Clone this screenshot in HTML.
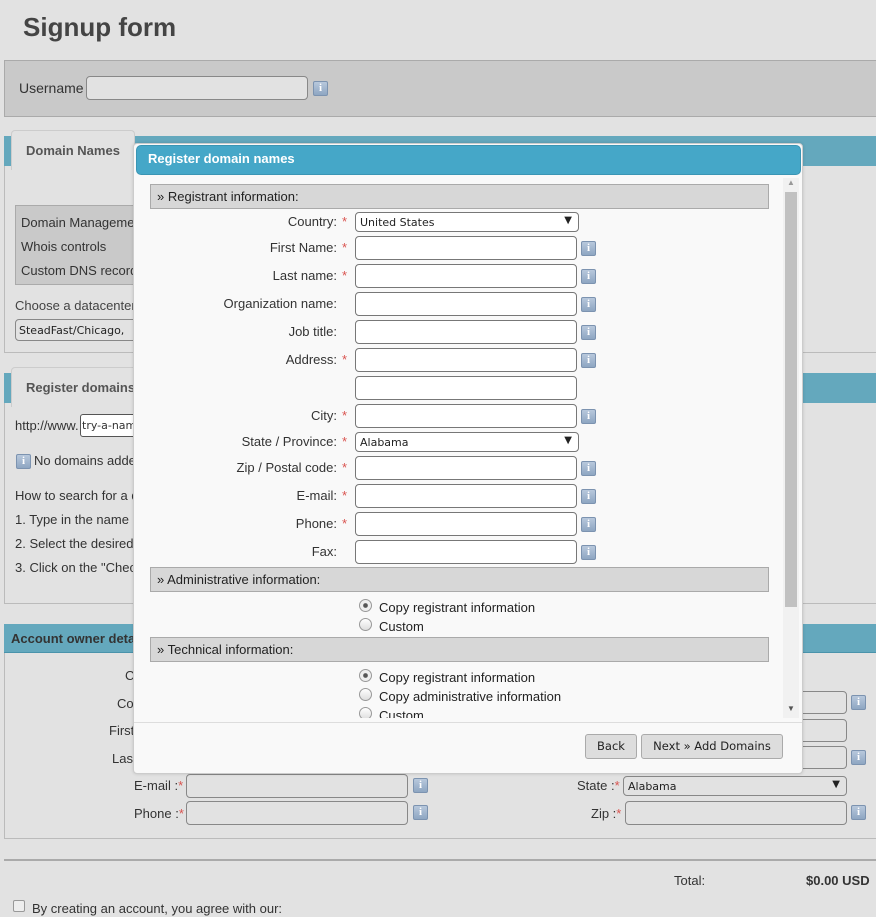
<!DOCTYPE html>
<html><head><meta charset="utf-8"><style>
*{box-sizing:border-box;margin:0;padding:0}
body{width:876px;height:917px;overflow:hidden;background:#e2e2e2;font-family:"Liberation Sans",Arial,sans-serif;font-size:13px;color:#333;position:relative}
.a{position:absolute}
.inp{position:absolute;background:#e2e2e2;border:1px solid #888;border-radius:4px}
.mi{position:absolute;background:#fff;border:1px solid #777;border-radius:4px;height:24px;width:222px;left:355px}
.i{position:absolute;width:15px;height:15px;background:linear-gradient(#b8c8dc,#8ea6c2);border:1px solid #7c93b0;border-radius:2px;color:#fff;font:bold 11px "Liberation Serif",serif;text-align:center;line-height:13px}
.lbl{position:absolute;right:539px;font-size:13px;color:#333;white-space:nowrap}
.st{color:#d9534f;position:absolute;left:100%;margin-left:5px}
.sec{position:absolute;left:150px;width:619px;height:25px;background:#d7d7d7;border:1px solid #aaa;font-size:13px;line-height:23px;padding-left:6px;color:#222}
.rad{position:absolute;left:359px;width:13px;height:13px;border-radius:50%;border:1px solid #999;background:linear-gradient(#fff,#ddd)}
.rl{position:absolute;left:379px;font-size:13px;color:#222}
.t{position:absolute;white-space:nowrap}
.sel{font-family:"DejaVu Sans",sans-serif;font-size:11px}
.btn{font-family:"DejaVu Sans",sans-serif;font-size:11.5px}
</style></head><body>
<div class="t" style="left:23px;top:12px;font-size:26px;font-weight:bold;color:#444">Signup form</div>
<div class="a" style="left:4px;top:60px;width:876px;height:57px;background:#c9c9c9;border:1px solid #aaa"></div>
<div class="t" style="left:19px;top:80px;font-size:14px;color:#333">Username</div>
<div class="inp" style="left:86px;top:76px;width:222px;height:24px"></div>
<div class="i" style="left:313px;top:81px">i</div>

<div class="a" style="left:4px;top:136px;width:876px;height:30px;background:#64a8bd"></div>
<div class="a" style="left:4px;top:166px;width:876px;height:187px;border:1px solid #bbb;border-top:none"></div>
<div class="a" style="left:11px;top:130px;width:124px;height:40px;background:#e2e2e2;border:1px solid #ccc;border-bottom:none;border-radius:4px 4px 0 0"></div>
<div class="t" style="left:26px;top:143px;font-weight:bold;color:#555">Domain Names</div>
<div class="a" style="left:15px;top:205px;width:125px;height:80px;background:#c9c9c9;border:1px solid #aaa"></div>
<div class="t" style="left:21px;top:215px">Domain Management</div>
<div class="t" style="left:21px;top:239px">Whois controls</div>
<div class="t" style="left:21px;top:263px">Custom DNS records</div>
<div class="t" style="left:15px;top:298px;color:#444">Choose a datacenter</div>
<div class="inp sel" style="left:15px;top:319px;width:140px;height:22px;padding:4px 3px;color:#222">SteadFast/Chicago,</div>

<div class="a" style="left:4px;top:373px;width:876px;height:30px;background:#64a8bd"></div>
<div class="a" style="left:4px;top:403px;width:876px;height:201px;border:1px solid #bbb;border-top:none"></div>
<div class="a" style="left:11px;top:367px;width:140px;height:40px;background:#e2e2e2;border:1px solid #ccc;border-bottom:none;border-radius:4px 4px 0 0"></div>
<div class="t" style="left:26px;top:380px;font-weight:bold;color:#555">Register domains</div>
<div class="t" style="left:15px;top:418px">http://www.</div>
<div class="a sel" style="left:80px;top:414px;width:80px;height:23px;background:#fff;border:1px solid #555;border-radius:3px;padding:4px 1px">try-a-name</div>
<div class="i" style="left:16px;top:454px">i</div>
<div class="t" style="left:34px;top:453px">No domains added</div>
<div class="t" style="left:15px;top:488px">How to search for a domain</div>
<div class="t" style="left:15px;top:512px">1. Type in the name of</div>
<div class="t" style="left:15px;top:536px">2. Select the desired</div>
<div class="t" style="left:15px;top:560px">3. Click on the "Check"</div>

<div class="a" style="left:4px;top:624px;width:876px;height:29px;background:#64a8bd;border-bottom:1px solid #4a93ab"></div>
<div class="a" style="left:4px;top:653px;width:876px;height:186px;border:1px solid #bbb;border-top:none"></div>
<div class="t" style="left:11px;top:631px;font-weight:bold;color:#333">Account owner details</div>
<div class="t" style="left:125px;top:668px">C</div>
<div class="t" style="left:117px;top:696px">Co</div>
<div class="t" style="left:109px;top:723px">First</div>
<div class="t" style="left:112px;top:751px">Last</div>
<div class="inp" style="left:790px;top:691px;width:57px;height:23px"></div>
<div class="i" style="left:851px;top:695px">i</div>
<div class="inp" style="left:790px;top:719px;width:57px;height:23px"></div>
<div class="inp" style="left:790px;top:746px;width:57px;height:23px"></div>
<div class="i" style="left:851px;top:750px">i</div>
<div class="t" style="left:134px;top:778px">E-mail :<span style="color:#d9534f">*</span></div>
<div class="inp" style="left:186px;top:774px;width:222px;height:24px"></div>
<div class="i" style="left:413px;top:778px">i</div>
<div class="t" style="left:134px;top:806px">Phone :<span style="color:#d9534f">*</span></div>
<div class="inp" style="left:186px;top:801px;width:222px;height:24px"></div>
<div class="i" style="left:413px;top:805px">i</div>
<div class="t" style="left:577px;top:778px">State :<span style="color:#d9534f">*</span></div>
<div class="inp sel" style="left:623px;top:776px;width:224px;height:20px;padding:3px 4px;color:#222">Alabama<span style="position:absolute;right:6px;top:2px;font-size:10px">▼</span></div>
<div class="t" style="left:591px;top:806px">Zip :<span style="color:#d9534f">*</span></div>
<div class="inp" style="left:625px;top:801px;width:222px;height:24px"></div>
<div class="i" style="left:851px;top:805px">i</div>

<div class="a" style="left:4px;top:859px;width:876px;height:2px;background:#aaa"></div>
<div class="t" style="left:674px;top:873px;color:#333">Total:</div>
<div class="t" style="left:806px;top:873px;font-weight:bold;color:#333">$0.00 USD</div>
<div class="a" style="left:13px;top:900px;width:12px;height:12px;border:1px solid #999;border-radius:2px;background:#eee"></div>
<div class="t" style="left:32px;top:901px;color:#333">By creating an account, you agree with our:</div>

<div class="a" style="left:133px;top:143px;width:670px;height:631px;background:#f9f9f9;border:1px solid #ccc;border-radius:4px;box-shadow:0 0 3px rgba(0,0,0,.15)"></div>
<div class="a" style="left:136px;top:145px;width:665px;height:30px;background:#45a7c8;border:1px solid #3a95b4;border-radius:5px"></div>
<div class="t" style="left:148px;top:151px;color:#fff;font-weight:bold;font-size:13px">Register domain names</div>
<div class="a" style="left:783px;top:178px;width:16px;height:540px;background:#f1f1f1"></div>
<div class="a" style="left:785px;top:192px;width:12px;height:415px;background:#c1c1c1"></div>
<div class="t" style="left:787px;top:178px;font-size:8px;color:#999">▲</div>
<div class="t" style="left:787px;top:704px;font-size:8px;color:#555">▼</div>

<div class="sec" style="top:184px">» Registrant information:</div>
<div class="lbl" style="top:214px">Country:<span class="st">*</span></div>
<div class="a sel" style="left:355px;top:212px;width:224px;height:20px;background:#fff;border:1px solid #777;border-radius:4px;padding:3px 4px;color:#222">United States<span style="position:absolute;right:6px;top:2px;font-size:10px">▼</span></div>
<div class="lbl" style="top:240px">First Name:<span class="st">*</span></div><div class="mi" style="top:236px"></div><div class="i" style="left:581px;top:241px">i</div>
<div class="lbl" style="top:268px">Last name:<span class="st">*</span></div><div class="mi" style="top:264px"></div><div class="i" style="left:581px;top:269px">i</div>
<div class="lbl" style="top:296px">Organization name:</div><div class="mi" style="top:292px"></div><div class="i" style="left:581px;top:297px">i</div>
<div class="lbl" style="top:324px">Job title:</div><div class="mi" style="top:320px"></div><div class="i" style="left:581px;top:325px">i</div>
<div class="lbl" style="top:352px">Address:<span class="st">*</span></div><div class="mi" style="top:348px"></div><div class="i" style="left:581px;top:353px">i</div>
<div class="mi" style="top:376px"></div>
<div class="lbl" style="top:408px">City:<span class="st">*</span></div><div class="mi" style="top:404px"></div><div class="i" style="left:581px;top:409px">i</div>
<div class="lbl" style="top:434px">State / Province:<span class="st">*</span></div>
<div class="a sel" style="left:355px;top:432px;width:224px;height:20px;background:#fff;border:1px solid #777;border-radius:4px;padding:3px 4px;color:#222">Alabama<span style="position:absolute;right:6px;top:2px;font-size:10px">▼</span></div>
<div class="lbl" style="top:460px">Zip / Postal code:<span class="st">*</span></div><div class="mi" style="top:456px"></div><div class="i" style="left:581px;top:461px">i</div>
<div class="lbl" style="top:488px">E-mail:<span class="st">*</span></div><div class="mi" style="top:484px"></div><div class="i" style="left:581px;top:489px">i</div>
<div class="lbl" style="top:516px">Phone:<span class="st">*</span></div><div class="mi" style="top:512px"></div><div class="i" style="left:581px;top:517px">i</div>
<div class="lbl" style="top:544px">Fax:</div><div class="mi" style="top:540px"></div><div class="i" style="left:581px;top:545px">i</div>

<div class="sec" style="top:567px">» Administrative information:</div>
<div class="rad" style="top:599px;background:radial-gradient(#555 25%,#eee 35%)"></div><div class="rl" style="top:600px">Copy registrant information</div>
<div class="rad" style="top:618px"></div><div class="rl" style="top:619px">Custom</div>
<div class="sec" style="top:637px">» Technical information:</div>
<div class="rad" style="top:669px;background:radial-gradient(#555 25%,#eee 35%)"></div><div class="rl" style="top:670px">Copy registrant information</div>
<div class="rad" style="top:688px"></div><div class="rl" style="top:689px">Copy administrative information</div>
<div class="a" style="left:150px;top:705px;width:630px;height:13px;overflow:hidden"><div class="rad" style="left:209px;top:2px"></div><div class="rl" style="left:229px;top:3px">Custom</div></div>

<div class="a" style="left:134px;top:722px;width:668px;height:1px;background:#ddd"></div>
<div class="a btn" style="left:585px;top:734px;width:52px;height:25px;background:#ddd;border:1px solid #aaa;border-radius:3px;line-height:23px;text-align:center;color:#222">Back</div>
<div class="a btn" style="left:641px;top:734px;width:142px;height:25px;background:#ddd;border:1px solid #aaa;border-radius:3px;line-height:23px;text-align:center;color:#222">Next » Add Domains</div>
</body></html>
